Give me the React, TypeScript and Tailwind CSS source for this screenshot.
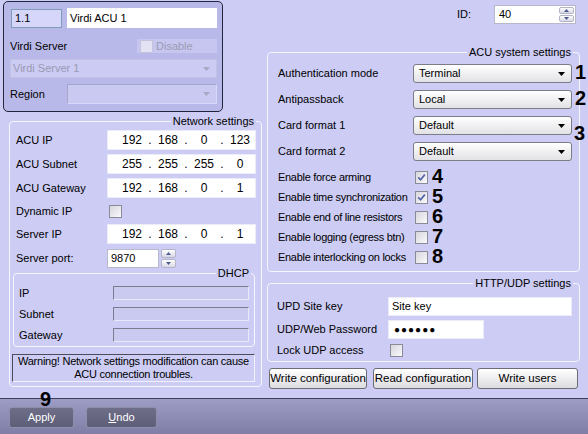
import React from 'react';

type CheckProps = { checked?: boolean; disabled?: boolean };

function Check({ checked, disabled }: CheckProps) {
  return (
    <span
      className={`w-[13px] h-[13px] shrink-0 border flex items-center justify-center ${
        disabled
          ? 'border-[#c4c4dc] bg-[#e2e2f2]'
          : 'border-[#8a8a98] bg-linear-to-br from-[#d6d6de] to-[#fbfbfb]'
      }`}
    >
      {checked && (
        <svg width="9" height="9" viewBox="0 0 9 9">
          <path d="M1.2 4.4 L3.6 6.8 L7.8 1.6" stroke="#5465a8" strokeWidth="1.7" fill="none" />
        </svg>
      )}
    </span>
  );
}

function Arrow({ color = '#000' }: { color?: string }) {
  return (
    <svg width="7" height="4" viewBox="0 0 7 4" className="shrink-0">
      <path d="M0 0h7L3.5 4z" fill={color} />
    </svg>
  );
}

function Combo({ value }: { value: string }) {
  return (
    <div className="w-[159px] h-[19px] shrink-0 rounded-[3px] border border-[#7c7c86] bg-linear-to-b from-white to-[#e2e2e6] flex items-center pl-[5px] pr-[6px]">
      <span className="flex-1">{value}</span>
      <Arrow />
    </div>
  );
}

function Spin() {
  return (
    <div className="w-[15px] h-full flex flex-col gap-[1px]">
      <div className="flex-1 border border-[#b4b4c8] rounded-[2px] bg-linear-to-b from-white to-[#d8d8e6] flex items-center justify-center">
        <svg width="5" height="3" viewBox="0 0 5 3">
          <path d="M0 3h5L2.5 0z" fill="#4d5b8c" />
        </svg>
      </div>
      <div className="flex-1 border border-[#b4b4c8] rounded-[2px] bg-linear-to-b from-white to-[#d8d8e6] flex items-center justify-center">
        <svg width="5" height="3" viewBox="0 0 5 3">
          <path d="M0 0h5L2.5 3z" fill="#4d5b8c" />
        </svg>
      </div>
    </div>
  );
}

function IpField({ parts }: { parts: string[] }) {
  return (
    <div className="w-[149px] h-[20px] bg-white border border-[#ececf8] flex items-center pl-[9px] text-[12px]">
      {parts.map((p, i) => (
        <React.Fragment key={i}>
          <span className="w-[30px] text-center">{p}</span>
          {i < 3 && <span className="w-[6px] text-center">.</span>}
        </React.Fragment>
      ))}
    </div>
  );
}

function Num({ n }: { n: string }) {
  return <span className="shrink-0 font-bold text-[20px] leading-[19px]">{n}</span>;
}

function Group({
  title,
  titleRight,
  className,
  children,
}: {
  title: string;
  titleRight: string;
  className: string;
  children: React.ReactNode;
}) {
  return (
    <div className={`relative border border-[#f6f6ff] rounded-[4px] ${className}`}>
      <span className={`absolute -top-[8px] ${titleRight} bg-[#ccccf4] px-[2px] leading-[14px]`}>
        {title}
      </span>
      {children}
    </div>
  );
}

function SunkenField() {
  return (
    <div className="w-[136px] h-[14px] border border-t-[#7c7c8c] border-l-[#7c7c8c] border-b-[#e8e8f8] border-r-[#e8e8f8] bg-[#cacaf0]" />
  );
}

export default function App() {
  return (
    <div className="relative w-[588px] h-[434px] overflow-hidden bg-[#ccccf4] text-[11px] text-black font-['Liberation_Sans',Arial,sans-serif] flex flex-col">
      <div className="flex h-[398px]">
        {/* left column */}
        <div className="w-[264px] shrink-0 flex flex-col">
          {/* device panel */}
          <div className="mt-[1px] ml-[3px] w-[220px] h-[111px] rounded-[5px] border border-[#24243c] bg-[#b9b9e9] pt-[6px] pl-[6px] pr-[5px] flex flex-col">
            <div className="flex items-center h-[20px]">
              <div className="ml-[1px] w-[51px] h-[19px] border border-[#7f9db9] bg-[#d6d6fa] flex items-center pl-[3px]">
                1.1
              </div>
              <div className="ml-[5px] w-[150px] h-[20px] bg-white flex items-center pl-[3px]">
                Virdi ACU 1
              </div>
            </div>
            <div className="mt-[11px] h-[14px] flex items-center">
              <span className="flex-1">Virdi Server</span>
              <div className="w-[80px] h-[14px] bg-[#c6c6f0] flex items-center pl-[3px] gap-[3px] text-[#9c9cb4]">
                <Check disabled />
                <span>Disable</span>
              </div>
            </div>
            <div className="mt-[6px] h-[19px] border border-[#c2c2e4] bg-[#cbcbf3] flex items-center pl-[2px] pr-[6px] text-[#9a9ab2]">
              <span className="flex-1">Virdi Server 1</span>
              <Arrow color="#a8a8c0" />
            </div>
            <div className="mt-[6px] h-[20px] flex items-center">
              <span className="w-[57px]">Region</span>
              <div className="w-[150px] h-[20px] border border-t-[#a6a6cc] border-l-[#a6a6cc] border-b-[#d8d8f8] border-r-[#d8d8f8] bg-[#c9c9f1] flex items-center justify-end pr-[6px]">
                <Arrow color="#a8a8c0" />
              </div>
            </div>
          </div>

          {/* network settings */}
          <Group title="Network settings" titleRight="right-[5px]" className="mt-[9px] ml-[9px] w-[253px] h-[266px] pt-[8px] flex flex-col">
            <div className="flex items-center h-[20px]">
              <span className="w-[97px] pl-[6px]">ACU IP</span>
              <IpField parts={['192', '168', '0', '123']} />
            </div>
            <div className="mt-[4px] flex items-center h-[20px]">
              <span className="w-[97px] pl-[6px]">ACU Subnet</span>
              <IpField parts={['255', '255', '255', '0']} />
            </div>
            <div className="mt-[4px] flex items-center h-[20px]">
              <span className="w-[97px] pl-[6px]">ACU Gateway</span>
              <IpField parts={['192', '168', '0', '1']} />
            </div>
            <div className="mt-[3px] flex items-center h-[20px]">
              <span className="w-[99px] pl-[6px]">Dynamic IP</span>
              <Check />
            </div>
            <div className="mt-[3px] flex items-center h-[20px]">
              <span className="w-[97px] pl-[6px]">Server IP</span>
              <IpField parts={['192', '168', '0', '1']} />
            </div>
            <div className="mt-[5px] flex items-center h-[19px]">
              <span className="w-[97px] pl-[6px]">Server port:</span>
              <div className="w-[52px] h-[19px] bg-white border border-[#b8b8cc] flex items-center pl-[3px]">9870</div>
              <div className="ml-[2px] h-[19px]">
                <Spin />
              </div>
            </div>

            <Group title="DHCP" titleRight="right-[3px]" className="mt-[5px] ml-[3px] w-[242px] h-[74px] pt-[12px] flex flex-col">
              <div className="flex items-center h-[14px]">
                <span className="w-[99px] pl-[5px]">IP</span>
                <SunkenField />
              </div>
              <div className="mt-[7px] flex items-center h-[14px]">
                <span className="w-[99px] pl-[5px]">Subnet</span>
                <SunkenField />
              </div>
              <div className="mt-[7px] flex items-center h-[14px]">
                <span className="w-[99px] pl-[5px]">Gateway</span>
                <SunkenField />
              </div>
            </Group>

            <div className="mt-[7px] ml-[2px] w-[243px] h-[28px] border border-t-[#4c4c5c] border-l-[#4c4c5c] border-b-[#f0f0ff] border-r-[#f0f0ff] flex flex-col items-center justify-center leading-[13px] whitespace-nowrap tracking-[-0.25px]">
              <span>Warning! Network settings modification can cause</span>
              <span>ACU connection troubles.</span>
            </div>
          </Group>
        </div>

        {/* right column */}
        <div className="w-[324px] shrink-0 flex flex-col">
          <div className="mt-[5px] flex items-center h-[19px]">
            <span className="ml-[193px] w-[37px]">ID:</span>
            <div className="w-[82px] h-[19px] bg-white border border-[#b8b8cc] flex items-center pl-[4px] pr-[1px] py-[1px]">
              <span className="flex-1">40</span>
              <Spin />
            </div>
          </div>

          <Group title="ACU system settings" titleRight="right-[6px]" className="mt-[28px] ml-[3px] w-[313px] h-[220px] pt-[11px] flex flex-col">
            {[
              ['Authentication mode', 'Terminal', '1'],
              ['Antipassback', 'Local', '2'],
              ['Card format 1', 'Default', ''],
              ['Card format 2', 'Default', ''],
            ].map(([label, value, n], i) => (
              <div key={label} className={`flex items-center h-[19px] ${i > 0 ? 'mt-[7px]' : ''}`}>
                <span className="w-[145px] shrink-0 pl-[10px]">{label}</span>
                <Combo value={value} />
                {n && (
                  <span className="ml-[3px]">
                    <Num n={n} />
                  </span>
                )}
              </div>
            ))}
            <span className="absolute left-[306px] top-[71px]">
              <Num n="3" />
            </span>

            <div className="mt-[6px] flex flex-col">
              {[
                ['Enable force arming', true, '4'],
                ['Enable time synchronization', true, '5'],
                ['Enable end of line resistors', false, '6'],
                ['Enable logging (egress btn)', false, '7'],
                ['Enable interlocking on locks', false, '8'],
              ].map(([label, checked, n]) => (
                <div key={label as string} className="flex items-center h-[20px]">
                  <span className="w-[147px] shrink-0 pl-[10px] whitespace-nowrap tracking-[-0.3px]">{label as string}</span>
                  <Check checked={checked as boolean} />
                  <span className="ml-[4px]">
                    <Num n={n as string} />
                  </span>
                </div>
              ))}
            </div>
          </Group>

          <Group title="HTTP/UDP settings" titleRight="right-[6px]" className="mt-[11px] ml-[3px] w-[313px] h-[79px] pt-[13px] flex flex-col">
            <div className="flex items-center h-[19px]">
              <span className="w-[120px] pl-[9px]">UPD Site key</span>
              <div className="w-[184px] h-[19px] bg-white border border-[#ececf8] flex items-center pl-[3px]">Site key</div>
            </div>
            <div className="mt-[4px] flex items-center h-[19px]">
              <span className="w-[120px] pl-[9px]">UDP/Web Password</span>
              <div className="w-[96px] h-[19px] bg-white border border-[#ececf8] flex items-center pl-[5px] text-[10px] tracking-[1px]">
                ●●●●●●
              </div>
            </div>
            <div className="mt-[5px] flex items-center h-[13px]">
              <span className="w-[122px] pl-[9px]">Lock UDP access</span>
              <Check />
            </div>
          </Group>

          <div className="mt-[6px] ml-[5px] flex h-[21px] text-[11.5px]">
            <button className="w-[98px] h-[21px] rounded-[3px] border border-[#6c6c74] bg-linear-to-b from-white to-[#dcdce0] whitespace-nowrap">
              Write configuration
            </button>
            <button className="ml-[6px] w-[100px] h-[21px] rounded-[3px] border border-[#6c6c74] bg-linear-to-b from-white to-[#dcdce0] whitespace-nowrap">
              Read configuration
            </button>
            <button className="ml-[4px] w-[101px] h-[21px] rounded-[3px] border border-[#6c6c74] bg-linear-to-b from-white to-[#dcdce0]">
              Write users
            </button>
          </div>
        </div>
      </div>

      {/* bottom bar */}
      <div className="h-[36px] border-t border-[#3e3e58] bg-linear-to-b from-[#9c9cc4] to-[#7e7ea6] flex items-start pt-[8px] pl-[9px]">
        <button className="w-[65px] h-[21px] rounded-[3px] border border-[#8e8eac] bg-linear-to-b from-[#6e6e88] to-[#5e5e78] text-white">
          Apply
        </button>
        <button className="ml-[12px] w-[71px] h-[21px] rounded-[3px] border border-[#8e8eac] bg-linear-to-b from-[#6e6e88] to-[#5e5e78] text-white">
          <span className="underline">U</span>ndo
        </button>
      </div>

      <span className="absolute left-[40px] top-[389px] font-bold text-[20px] leading-[20px]">9</span>
    </div>
  );
}
